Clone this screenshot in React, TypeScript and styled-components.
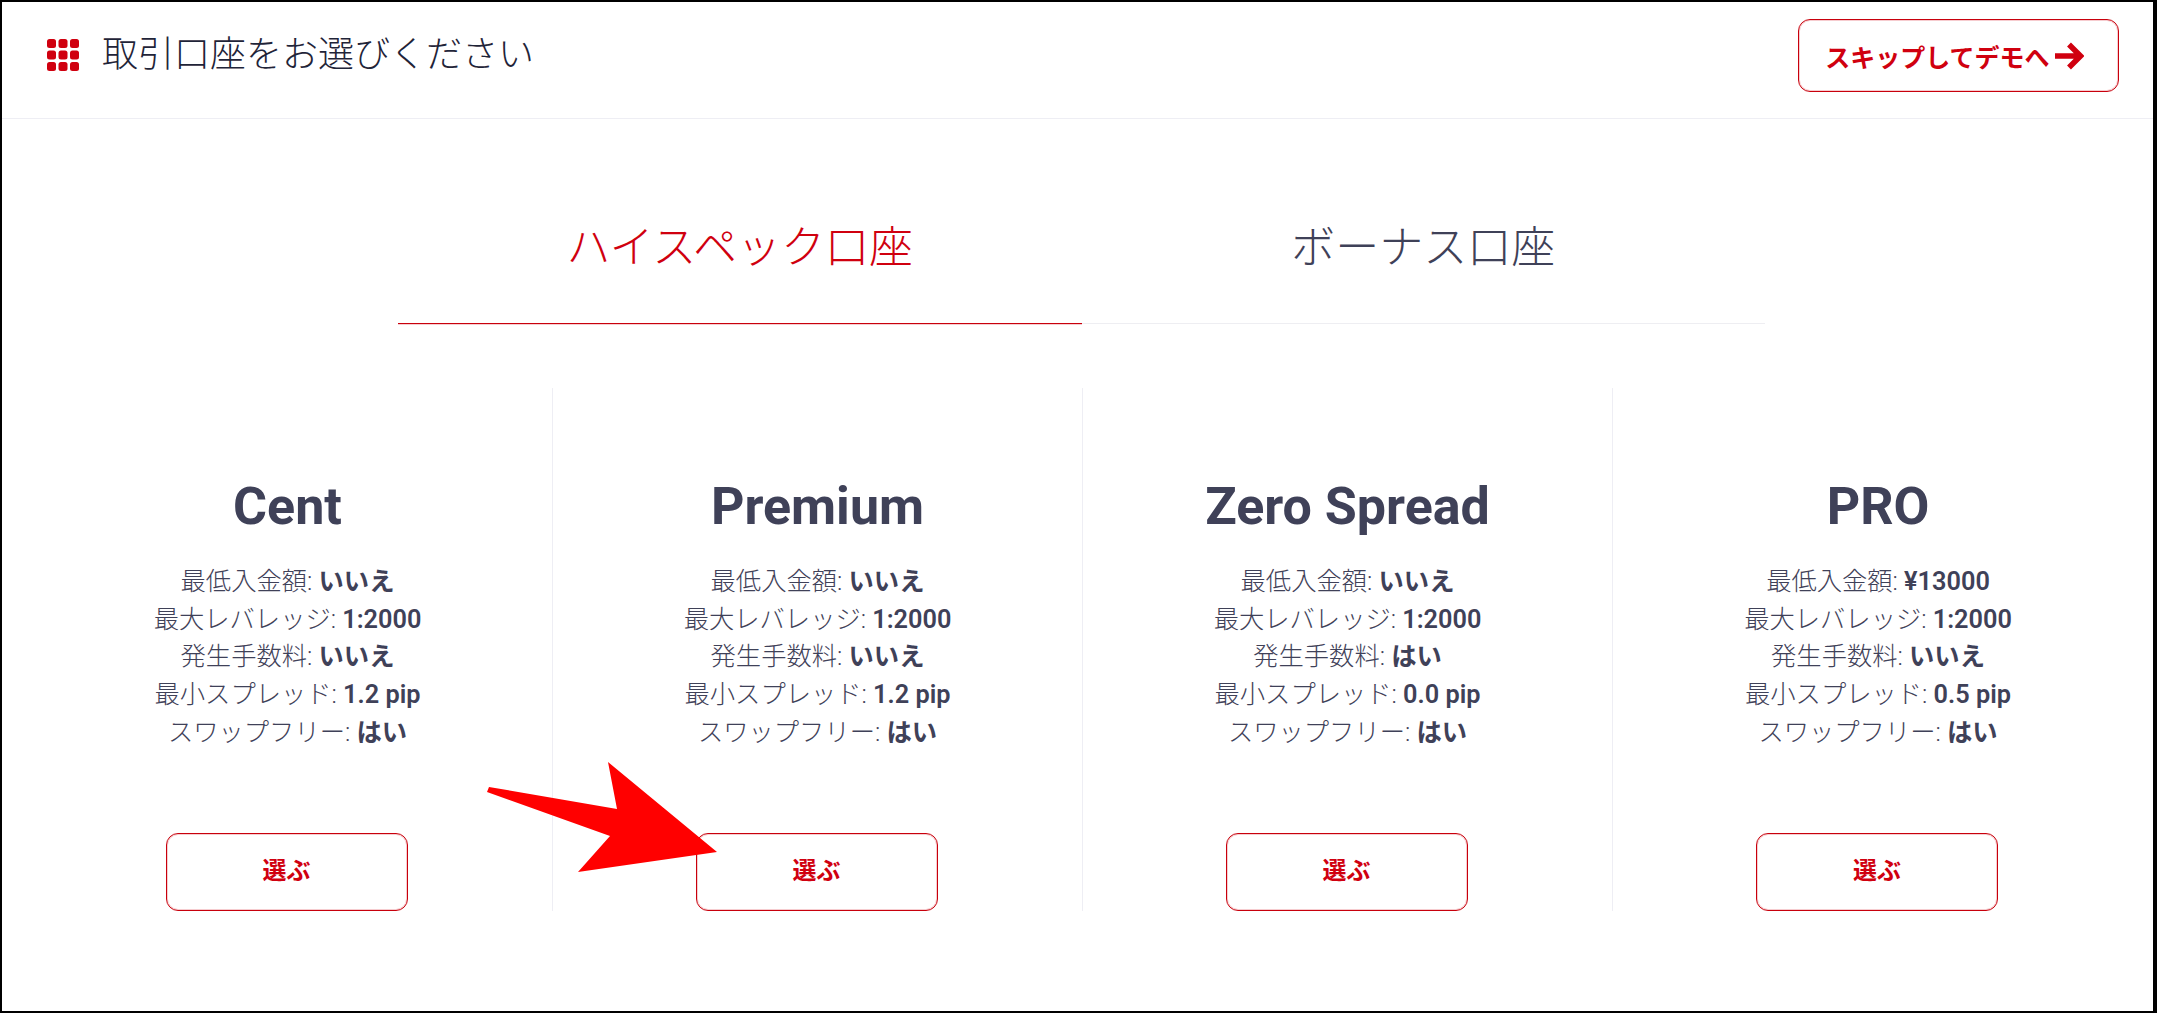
import React from "react";
import styled, { createGlobalStyle } from "styled-components";

const RED = "#d0000f";
const FONT = `Roboto, "Noto Sans CJK JP", sans-serif`;

const Global = createGlobalStyle`
  html, body { margin: 0; padding: 0; background: #fff; }
  body { font-family: ${FONT}; }
`;

const Frame = styled.div`
  position: relative;
  box-sizing: border-box;
  width: 2157px;
  height: 1013px;
  border: 2px solid #000;
  border-right-width: 4px;
  background: #fff;
  overflow: hidden;
`;

const Header = styled.header`
  box-sizing: border-box;
  height: 117px;
  padding: 17px 34px 0 45px;
  display: flex;
  justify-content: space-between;
  align-items: flex-start;
  border-bottom: 1.5px solid #eeeef4;
`;

const TitleGroup = styled.div`
  display: flex;
  align-items: center;
  height: 66px;
  gap: 23px;
  svg { margin-top: 5px; }
`;

const Title = styled.h1`
  margin: -2px 0 0;
  font-size: 36px;
  font-weight: 300;
  color: #1f2438;
  white-space: nowrap;
`;

const SkipButton = styled.button`
  box-sizing: border-box;
  width: 321px;
  height: 73px;
  display: flex;
  align-items: center;
  justify-content: center;
  gap: 4px;
  padding: 0 8px 0 0;
  background: #fff;
  border: 1px solid #c8000c;
  box-shadow: inset 0 0 0 1px rgba(208, 0, 15, 0.2);
  border-radius: 12px;
  color: ${RED};
  font-family: ${FONT};
  font-size: 25px;
  font-weight: 700;
  white-space: nowrap;
`;

const Tabs = styled.nav`
  display: flex;
  width: 1367px;
  margin: 80px 0 0 396px;
`;

const Tab = styled.div<{ $active?: boolean }>`
  flex: 1;
  height: 125px;
  box-sizing: border-box;
  padding-top: 3px;
  line-height: 92px;
  text-align: center;
  font-size: 44px;
  font-weight: 300;
  color: ${(p) => (p.$active ? RED : "#3f4158")};
  border-bottom: 1px solid ${(p) => (p.$active ? "#c8000c" : "#eeeef2")};
  box-shadow: ${(p) => (p.$active ? "0 1px 0 rgba(208, 0, 15, 0.2)" : "none")};
`;

const Plans = styled.section`
  display: grid;
  grid-template-columns: repeat(4, 530px);
  margin: 64px 0 0 21px;
  height: 523px;
`;

const Plan = styled.article`
  box-sizing: border-box;
  display: flex;
  flex-direction: column;
  align-items: center;
  padding-top: 89px;
  border-right: 1.5px solid #eeeef4;
  color: #3f4158;
  &:last-child { border-right: none; }
`;

const PlanName = styled.h2`
  margin: 0;
  font-size: 52px;
  line-height: 60px;
  font-weight: 700;
  color: #3f4158;
`;

const Specs = styled.div`
  margin-top: 26px;
  text-align: center;
  font-size: 25.3px;
  line-height: 37.7px;
  font-weight: 300;
`;

const Spec = styled.div`
  white-space: nowrap;
  strong { font-weight: 600; }
`;

const PickButton = styled.button`
  box-sizing: border-box;
  margin: auto 2px 0 0;
  width: 242px;
  height: 78px;
  padding: 0 0 8px;
  background: #fff;
  border: 1px solid #c8000c;
  box-shadow: inset 0 0 0 1px rgba(208, 0, 15, 0.2);
  border-radius: 12px;
  color: ${RED};
  font-family: ${FONT};
  font-size: 24px;
  font-weight: 700;
`;

const Pointer = styled.svg`
  position: absolute;
  left: -2px;
  top: -2px;
  width: 2157px;
  height: 1013px;
  pointer-events: none;
`;

const plans = [
  { name: "Cent", min: "いいえ", fee: "いいえ", spread: "1.2 pip" },
  { name: "Premium", min: "いいえ", fee: "いいえ", spread: "1.2 pip" },
  { name: "Zero Spread", min: "いいえ", fee: "はい", spread: "0.0 pip" },
  { name: "PRO", min: "¥13000", fee: "いいえ", spread: "0.5 pip" },
];

const GridIcon = () => (
  <svg width="32" height="32" viewBox="0 0 32 32">
    {[0, 11.5, 23].flatMap((y) =>
      [0, 11.5, 23].map((x) => (
        <rect key={`${x}-${y}`} x={x} y={y} width="9" height="9" rx="2.5" fill={RED} />
      ))
    )}
  </svg>
);

const ArrowIcon = () => (
  <svg width="30" height="30" viewBox="0 0 30 30">
    <path d="M1 15H26M15 3.5L26.500 15L15 26.500" fill="none" stroke={RED} strokeWidth="5.500" />
  </svg>
);

export default function App() {
  return (
    <>
      <Global />
      <Frame>
        <Header>
          <TitleGroup>
            <GridIcon />
            <Title>取引口座をお選びください</Title>
          </TitleGroup>
          <SkipButton>
            スキップしてデモへ
            <ArrowIcon />
          </SkipButton>
        </Header>
        <Tabs>
          <Tab $active>ハイスペック口座</Tab>
          <Tab>ボーナス口座</Tab>
        </Tabs>
        <Plans>
          {plans.map((p) => (
            <Plan key={p.name}>
              <PlanName>{p.name}</PlanName>
              <Specs>
                <Spec>最低入金額: <strong>{p.min}</strong></Spec>
                <Spec>最大レバレッジ: <strong>1:2000</strong></Spec>
                <Spec>発生手数料: <strong>{p.fee}</strong></Spec>
                <Spec>最小スプレッド: <strong>{p.spread}</strong></Spec>
                <Spec>スワップフリー: <strong>はい</strong></Spec>
              </Specs>
              <PickButton>選ぶ</PickButton>
            </Plan>
          ))}
        </Plans>
        <Pointer viewBox="0 0 2157 1013">
          <polygon points="489,787 617,809 608,762 717,852 578,872 610,836 487,792" fill="#ff0000" />
        </Pointer>
      </Frame>
    </>
  );
}
